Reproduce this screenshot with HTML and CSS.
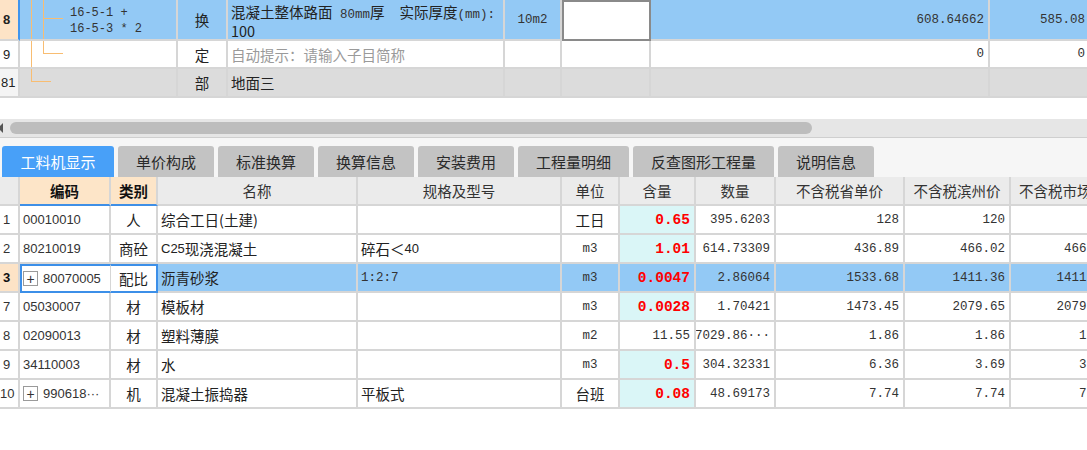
FILE: index.html
```html
<!DOCTYPE html>
<html lang="zh-CN">
<head>
<meta charset="utf-8">
<title>工料机显示</title>
<link rel="stylesheet" href="styles.css">
</head>
<body>
<div class="page">
  <div class="grid top">
    <div class="row r8 blue">
      <div class="cell t-idx cur">8</div>
      <div class="cell t-tree">
        <span class="ln va"></span><span class="ln vb"></span><span class="ln h h8"></span>
        <div class="tcode">16-5-1 +<br>16-5-3 * 2</div>
      </div>
      <div class="cell t-type c">换</div>
      <div class="cell t-name multi">混凝土整体路面<span class="m"> 80mm</span>厚<span class="m">  </span>实际厚度<span class="m">(mm):</span><br>100</div>
      <div class="cell t-unit c m">10m2</div>
      <div class="cell t-box edit"></div>
      <div class="cell t-c7 r m">608.64662</div>
      <div class="cell t-c8 r m">585.08</div>
    </div>
    <div class="row r9">
      <div class="cell t-idx">9</div>
      <div class="cell t-tree">
        <span class="ln va"></span><span class="ln vb short"></span><span class="ln h h9"></span>
      </div>
      <div class="cell t-type c">定</div>
      <div class="cell t-name hint">自动提示：请输入子目简称</div>
      <div class="cell t-unit"></div>
      <div class="cell t-box"></div>
      <div class="cell t-c7 r m">0</div>
      <div class="cell t-c8 r m">0</div>
    </div>
    <div class="row r81 gray">
      <div class="cell t-idx idx-cut">81</div>
      <div class="cell t-tree">
        <span class="ln va short"></span><span class="ln h h81"></span>
      </div>
      <div class="cell t-type c">部</div>
      <div class="cell t-name">地面三</div>
      <div class="cell t-unit"></div>
      <div class="cell t-box"></div>
      <div class="cell t-c7"></div>
      <div class="cell t-c8"></div>
    </div>
  </div>

  <div class="scroll">
    <span class="arrow"></span>
    <div class="thumb"></div>
  </div>

  <div class="tabs">
    <div class="tab active">工料机显示</div>
    <div class="tab w96">单价构成</div>
    <div class="tab w96">标准换算</div>
    <div class="tab w96">换算信息</div>
    <div class="tab w96">安装费用</div>
    <div class="tab w111">工程量明细</div>
    <div class="tab w141">反查图形工程量</div>
    <div class="tab w96">说明信息</div>
  </div>

  <div class="grid bottom">
    <div class="row head">
      <div class="cell b-idx"></div>
      <div class="cell b-code c hl">编码</div>
      <div class="cell b-type c hl">类别</div>
      <div class="cell b-name c">名称</div>
      <div class="cell b-spec c">规格及型号</div>
      <div class="cell b-unit c">单位</div>
      <div class="cell b-qty c">含量</div>
      <div class="cell b-amt c">数量</div>
      <div class="cell b-p1 c">不含税省单价</div>
      <div class="cell b-p2 c">不含税滨州价</div>
      <div class="cell b-p3 lpad">不含税市场价</div>
    </div>

    <div class="row">
      <div class="cell b-idx idx">1</div>
      <div class="cell b-code code">00010010</div>
      <div class="cell b-type c">人</div>
      <div class="cell b-name">综合工日(土建)</div>
      <div class="cell b-spec"></div>
      <div class="cell b-unit c">工日</div>
      <div class="cell b-qty r red cyan">0.65</div>
      <div class="cell b-amt r m">395.6203</div>
      <div class="cell b-p1 r m">128</div>
      <div class="cell b-p2 r m">120</div>
      <div class="cell b-p3 r m"></div>
    </div>

    <div class="row">
      <div class="cell b-idx idx">2</div>
      <div class="cell b-code code">80210019</div>
      <div class="cell b-type c">商砼</div>
      <div class="cell b-name"><span class="sans">C25</span>现浇混凝土</div>
      <div class="cell b-spec">碎石＜<span class="sans">40</span></div>
      <div class="cell b-unit c m">m3</div>
      <div class="cell b-qty r red cyan">1.01</div>
      <div class="cell b-amt r m">614.73309</div>
      <div class="cell b-p1 r m">436.89</div>
      <div class="cell b-p2 r m">466.02</div>
      <div class="cell b-p3 r m">466.02</div>
    </div>

    <div class="row blue">
      <div class="cell b-idx idx cur-b">3</div>
      <div class="cell b-code code sel-a"><span class="plus">+</span>80070005</div>
      <div class="cell b-type c sel-b">配比</div>
      <div class="cell b-name">沥青砂浆</div>
      <div class="cell b-spec m">1:2:7</div>
      <div class="cell b-unit c m">m3</div>
      <div class="cell b-qty r red">0.0047</div>
      <div class="cell b-amt r m">2.86064</div>
      <div class="cell b-p1 r m">1533.68</div>
      <div class="cell b-p2 r m">1411.36</div>
      <div class="cell b-p3 r m">1411.36</div>
    </div>

    <div class="row">
      <div class="cell b-idx idx">7</div>
      <div class="cell b-code code">05030007</div>
      <div class="cell b-type c">材</div>
      <div class="cell b-name">模板材</div>
      <div class="cell b-spec"></div>
      <div class="cell b-unit c m">m3</div>
      <div class="cell b-qty r red cyan">0.0028</div>
      <div class="cell b-amt r m">1.70421</div>
      <div class="cell b-p1 r m">1473.45</div>
      <div class="cell b-p2 r m">2079.65</div>
      <div class="cell b-p3 r m">2079.65</div>
    </div>

    <div class="row">
      <div class="cell b-idx idx">8</div>
      <div class="cell b-code code">02090013</div>
      <div class="cell b-type c">材</div>
      <div class="cell b-name">塑料薄膜</div>
      <div class="cell b-spec"></div>
      <div class="cell b-unit c m">m2</div>
      <div class="cell b-qty r m">11.55</div>
      <div class="cell b-amt r m">7029.86···</div>
      <div class="cell b-p1 r m">1.86</div>
      <div class="cell b-p2 r m">1.86</div>
      <div class="cell b-p3 r m">1.86</div>
    </div>

    <div class="row">
      <div class="cell b-idx idx">9</div>
      <div class="cell b-code code">34110003</div>
      <div class="cell b-type c">材</div>
      <div class="cell b-name">水</div>
      <div class="cell b-spec"></div>
      <div class="cell b-unit c m">m3</div>
      <div class="cell b-qty r red cyan">0.5</div>
      <div class="cell b-amt r m">304.32331</div>
      <div class="cell b-p1 r m">6.36</div>
      <div class="cell b-p2 r m">3.69</div>
      <div class="cell b-p3 r m">3.69</div>
    </div>

    <div class="row">
      <div class="cell b-idx idx idx2">10</div>
      <div class="cell b-code code"><span class="plus">+</span>990618···</div>
      <div class="cell b-type c">机</div>
      <div class="cell b-name">混凝土振捣器</div>
      <div class="cell b-spec">平板式</div>
      <div class="cell b-unit c">台班</div>
      <div class="cell b-qty r red cyan">0.08</div>
      <div class="cell b-amt r m">48.69173</div>
      <div class="cell b-p1 r m">7.74</div>
      <div class="cell b-p2 r m">7.74</div>
      <div class="cell b-p3 r m">7.74</div>
    </div>
  </div>
</div>
</body>
</html>
```

FILE: styles.css
```css
* { box-sizing: border-box; }

html, body {
  margin: 0;
  padding: 0;
  background: #ffffff;
  overflow: hidden;
}

body {
  width: 1087px;
  height: 450px;
  font-family: "Noto Sans CJK SC", "Noto Sans", sans-serif;
  font-size: 14.5px;
  color: #222222;
}

.page {
  width: 1130px;
}

/* ---------- generic grid ---------- */
.row {
  display: flex;
  height: 29px;
}

.cell {
  flex: none;
  display: flex;
  align-items: center;
  white-space: pre;
  overflow: hidden;
  border-right: 2px solid #d6d6d6;
  border-bottom: 2px solid #d6d6d6;
  padding: 0 3px;
}

.c { justify-content: center; }
.r { justify-content: flex-end; padding-right: 4px; }
.lpad { padding-left: 8px; }

.m {
  font-family: "Liberation Mono", "DejaVu Sans Mono", monospace;
  font-size: 12.5px;
  color: #333333;
}

.sans {
  font-family: "Liberation Sans", Arial, sans-serif;
  font-size: 13px;
}

/* ---------- top grid ---------- */
.top .r8 { height: 41px; }
.top .r9 { height: 28px; }
.top .r81 { height: 29px; }

.t-idx  { width: 20px; padding: 0 0 0 3px; font-family: "Liberation Sans", Arial, sans-serif; font-size: 13px; }
.t-tree { width: 158px; position: relative; padding-left: 50px; }
.t-type { width: 50px; }
.t-name { width: 277px; }
.t-unit { width: 57px; }
.t-box  { width: 89px; }
.t-c7   { width: 339px; }
.t-c8   { width: 101px; }

.blue .cell { background: #93c9f5; }
.gray .cell { background: #dcdcdc; }
.gray .t-idx { background: #f4f4f4; }

.top .cur {
  background: #fde3c6;
  font-weight: bold;
  border-right: 2px solid #3f95ee;
}

.idx-cut { padding-left: 1px; }

.multi {
  display: block;
  padding-top: 4px;
  line-height: 16px;
  white-space: pre;
}

.tcode {
  font-family: "Liberation Mono", "DejaVu Sans Mono", monospace;
  font-size: 12px;
  line-height: 16px;
  color: #333333;
  align-self: flex-start;
  padding-top: 5px;
}

.top .edit {
  background: #ffffff;
  border: 2px solid #8a8a8a;
}

.hint { color: #9a9a9a; }

.ln {
  position: absolute;
  background: #f8bd72;
}
.ln.va { left: 11px; top: 0; bottom: 0; width: 1px; }
.ln.vb { left: 23px; top: 0; bottom: 0; width: 1px; }
.ln.short { bottom: auto; height: 12px; }
.ln.h { height: 1px; width: 20px; }
.ln.h8 { left: 23px; top: 18px; }
.ln.h9 { left: 23px; top: 12px; }
.ln.h81 { left: 11px; top: 12px; width: 20px; }

/* ---------- scroll bar ---------- */
.scroll {
  margin-top: 21px;
  height: 19px;
  background: #e6e6e6;
  border-bottom: 1px solid #cfcfcf;
  display: flex;
  align-items: center;
}

.arrow {
  width: 0;
  height: 0;
  margin-left: -2px;
  border-right: 5px solid #555555;
  border-top: 5px solid transparent;
  border-bottom: 5px solid transparent;
}

.thumb {
  margin-left: 7px;
  width: 802px;
  height: 12px;
  border-radius: 6px;
  background: #bdbdbd;
}

/* ---------- tabs ---------- */
.tabs {
  height: 39px;
  background: #f6f6f6;
  display: flex;
  align-items: flex-end;
  gap: 4px;
  padding-left: 2px;
}

.tab {
  height: 31px;
  width: 111px;
  display: flex;
  align-items: center;
  justify-content: center;
  background: #c3c3c3;
  color: #2a2a2a;
  font-size: 15px;
  border-radius: 3px 3px 0 0;
}

.tab.active {
  background: #48a0f8;
  color: #ffffff;
  width: 112px;
}

.w96 { width: 96px; }
.w111 { width: 111px; }
.w141 { width: 141px; }

/* ---------- bottom grid ---------- */
.b-idx  { width: 20px; }
.b-code { width: 91px; }
.b-type { width: 47px; }
.b-name { width: 200px; }
.b-spec { width: 204px; }
.b-unit { width: 58px; }
.b-qty  { width: 76px; }
.b-amt  { width: 80px; }
.b-p1   { width: 129px; }
.b-p2   { width: 106px; }
.b-p3   { width: 104px; }

.head .cell {
  background: #ebebeb;
  color: #333333;
}

.head .hl {
  background: #fde5c8;
  color: #111111;
  font-weight: bold;
  border-bottom: 2px solid #3f8fe6;
}

.idx {
  padding: 0 0 0 3px;
  font-family: "Liberation Sans", Arial, sans-serif;
  font-size: 13px;
  color: #333333;
}

.idx2 { padding-left: 0; }

.code {
  font-family: "Liberation Sans", Arial, sans-serif;
  font-size: 13px;
  color: #333333;
}

.cyan { background: #daf6f7; }

.red {
  font-family: "Liberation Mono", "DejaVu Sans Mono", monospace;
  font-size: 14.5px;
  font-weight: bold;
  color: #ff0000;
}

.blue .cur-b {
  background: #fde3c6;
  font-weight: bold;
  color: #111111;
}

.blue .sel-a,
.blue .sel-b {
  background: #ffffff;
  border-top: 2px solid #3c8fe8;
  border-bottom: 2px solid #3c8fe8;
}
.blue .sel-a { border-left: 2px solid #3c8fe8; border-right: 1px solid #d6d6d6; padding-left: 1px; }
.blue .sel-b { border-right: 2px solid #3c8fe8; }

.plus {
  width: 15px;
  height: 15px;
  border: 1px solid #9a9a9a;
  background: #ffffff;
  display: inline-flex;
  align-items: center;
  justify-content: center;
  font-size: 14px;
  line-height: 1;
  color: #333333;
  margin-right: 5px;
  flex: none;
}
```
